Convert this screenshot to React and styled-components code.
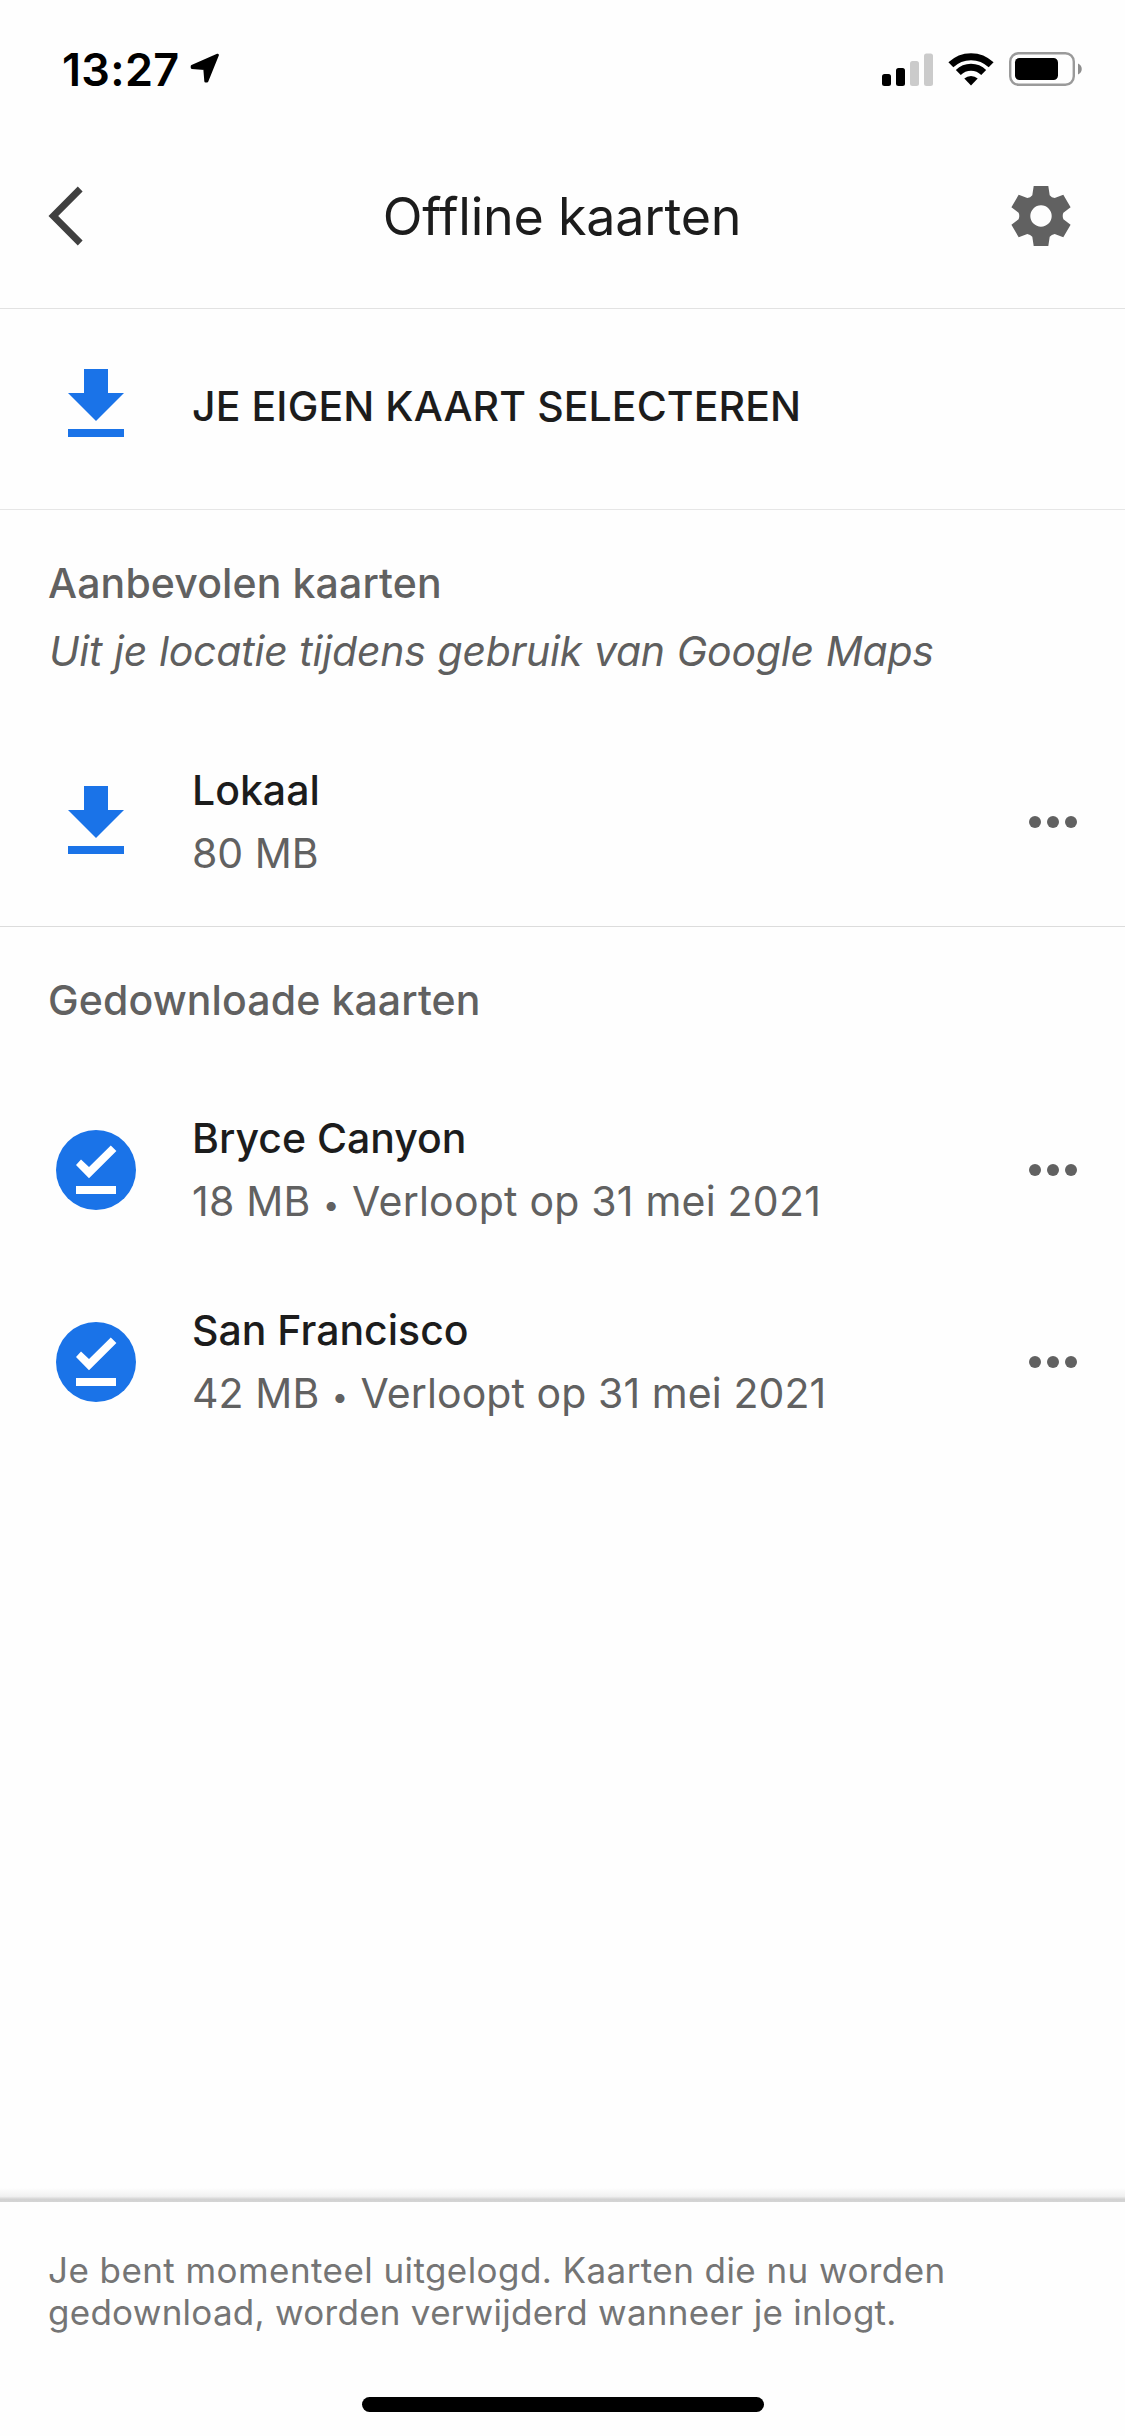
import styled, { createGlobalStyle } from "styled-components";

const GlobalStyle = createGlobalStyle`
  * {
    box-sizing: border-box;
    margin: 0;
    padding: 0;
  }
  body {
    background: #fefefe;
    font-family: Inter, "Liberation Sans", sans-serif;
    color: #1c1c1c;
  }
  svg {
    display: block;
    flex-shrink: 0;
  }
  button {
    border: none;
    background: none;
    font: inherit;
    color: inherit;
  }
`;

const Screen = styled.div`
  width: 1125px;
  height: 2436px;
  display: flex;
  flex-direction: column;
  overflow: hidden;
`;

const StatusBar = styled.div`
  height: 124px;
  padding: 14px 42px 0 62px;
  display: flex;
  align-items: center;
  justify-content: space-between;
  color: #000;
`;

const Clock = styled.div`
  display: flex;
  align-items: center;
  gap: 11px;
  font-size: 45px;
  font-weight: 600;
  letter-spacing: 0.3px;
`;

const StatusIcons = styled.div`
  display: flex;
  align-items: center;
  gap: 15px;
`;

const Header = styled.header`
  height: 185px;
  padding: 0 54px 0 48px;
  display: grid;
  grid-template-columns: 60px 1fr 60px;
  align-items: center;
  border-bottom: 1px solid #e2e2e2;
`;

const Title = styled.h1`
  padding-left: 5px;
  font-size: 52px;
  font-weight: 400;
  letter-spacing: -0.23px;
  text-align: center;
`;

const Select = styled.button`
  height: 201px;
  padding: 0 56px 8px;
  display: flex;
  align-items: center;
  gap: 56px;
  border-bottom: 1px solid #e6e6e6;
  font-size: 41px;
  font-weight: 500;
  letter-spacing: 0.1px;
  line-height: 60px;
  span {
    padding-top: 2px;
  }
`;

const Section = styled.section`
  padding: 39px 0 ${(props) => (props.$line ? "8px" : "0")};
  border-bottom: ${(props) => (props.$line ? "1px solid #dcdcdc" : "none")};
`;

const SectionTitle = styled.h2`
  padding-left: 48px;
  font-size: 41px;
  font-weight: 500;
  letter-spacing: 0.12px;
  line-height: 68px;
  color: #616161;
`;

const SectionText = styled.p`
  padding-left: 49px;
  font-size: 41px;
  font-style: italic;
  letter-spacing: -0.22px;
  word-spacing: 0.5px;
  line-height: 68px;
  color: #5f5f5f;
`;

const List = styled.ul`
  padding-top: ${(props) => props.$top}px;
  list-style: none;
`;

const Item = styled.li`
  height: 192px;
  padding: 0 45px 0 56px;
  display: flex;
  align-items: center;
  gap: 56px;
`;

const Info = styled.div`
  flex: 1;
  font-size: 41px;
  line-height: 63px;
`;

const Name = styled.div`
  font-weight: 500;
`;

const Size = styled.div`
  letter-spacing: ${(props) => props.$spacing || 0}px;
  color: #616161;
`;

const Dot = styled.span`
  display: inline-block;
  width: 18px;
  font-size: 29px;
  line-height: 1;
  text-align: center;
  vertical-align: 1px;
`;

const Footer = styled.footer`
  height: 248px;
  margin-top: auto;
  display: flex;
  flex-direction: column;
  align-items: center;
`;

const Shadow = styled.div`
  width: 100%;
  height: 14px;
  background: linear-gradient(#fefefe, #f0f0f0 60%, #d2d2d2 80%, #d4d4d4);
`;

const Notice = styled.p`
  width: 100%;
  padding: 47px 48px 0;
  font-size: 35px;
  line-height: 42px;
  color: #757575;
`;

const Line = styled.span`
  display: block;
  letter-spacing: ${(props) => props.$spacing}px;
`;

const HomeBar = styled.div`
  width: 402px;
  height: 15px;
  margin: auto 0 24px;
  border-radius: 8px;
  background: #000;
`;

const LocationIcon = () => (
  <svg width="31" height="32" viewBox="0 0 31 32">
    <path
      d="M2 13.2 L27.6 2 L17 28.2 L15.6 28.2 L14.6 15.6 L2 14.6 Z"
      fill="#000"
      stroke="#000"
      strokeWidth="2.6"
      strokeLinejoin="round"
    />
  </svg>
);

const SignalIcon = () => (
  <svg width="51" height="33" viewBox="0 0 51 33">
    <rect x="0" y="21" width="9" height="12" rx="2.5" />
    <rect x="14" y="15" width="9" height="18" rx="2.5" />
    <rect x="28" y="8" width="9" height="25" rx="2.5" fill="#cbcbcb" />
    <rect x="42" y="0.5" width="9" height="32.5" rx="2.5" fill="#cbcbcb" />
  </svg>
);

const WifiIcon = () => (
  <svg width="46" height="34" viewBox="0 0 46 34">
    <g fill="none" stroke="#000" strokeWidth="7">
      <path d="M2.85 12.85 A28.8 28.8 0 0 1 43.15 12.85" />
      <path d="M10.3 20.6 A18 18 0 0 1 35.7 20.6" />
    </g>
    <path d="M23 33.4 L16.3 26.6 A9.6 9.6 0 0 1 29.7 26.6 Z" />
  </svg>
);

const BatteryIcon = () => (
  <svg width="74" height="34" viewBox="0 0 74 34">
    <rect x="1.2" y="1.2" width="63.6" height="31.6" rx="8.5" fill="none" stroke="#9a9a9a" strokeWidth="2.4" />
    <rect x="6" y="6" width="43" height="22" rx="4.5" />
    <path d="M69 11.5 C74 13.5 74 20.5 69 22.5 Z" fill="#8e8e8e" />
  </svg>
);

const BackIcon = () => (
  <svg width="36" height="60" viewBox="0 0 36 60">
    <path d="M32.2 3 L5.3 30 L32.2 57" fill="none" stroke="#404040" strokeWidth="6.8" />
  </svg>
);

const GearIcon = () => (
  <svg width="60" height="60" viewBox="-30 -30 60 60">
    <path
      fill="#616161"
      fillRule="evenodd"
      d="M-7.3 -30 H7.3 L8.7 -20.8 Q10.6 -18.3 13.7 -17.9 L22.3 -21.3 L29.6 -8.7 L22.4 -3.2 Q21 0 22.4 3.2
        L29.6 8.7 L22.3 21.3 L13.7 17.9 Q10.6 18.3 8.7 20.8 L7.3 30 H-7.3 L-8.7 20.8 Q-10.6 18.3 -13.7 17.9
        L-22.3 21.3 L-29.6 8.7 L-22.4 3.2 Q-21 0 -22.4 -3.2 L-29.6 -8.7 L-22.3 -21.3 L-13.7 -17.9
        Q-10.6 -18.3 -8.7 -20.8 Z M0 -10.7 A10.7 10.7 0 1 0 0 10.7 A10.7 10.7 0 1 0 0 -10.7 Z"
    />
  </svg>
);

const DownloadIcon = () => (
  <svg width="80" height="80" viewBox="0 0 80 80" fill="#1a73e8">
    <path d="M28 4 H52 V28 H68 L40 56 L12 28 H28 Z" />
    <rect x="12" y="64" width="56" height="8" />
  </svg>
);

const DoneIcon = () => (
  <svg width="80" height="80" viewBox="0 0 80 80">
    <circle cx="40" cy="40" r="40" fill="#1a73e8" />
    <path d="M20 34.9 L25 29.6 L33 37 L54.8 15.4 L60.4 20.9 L33 48.2 Z" fill="#fff" />
    <rect x="20" y="56" width="40" height="8" fill="#fff" />
  </svg>
);

const MoreIcon = () => (
  <svg width="54" height="14" viewBox="0 0 54 14" fill="#616161">
    <circle cx="9" cy="7" r="6" />
    <circle cx="27" cy="7" r="6" />
    <circle cx="45" cy="7" r="6" />
  </svg>
);

const downloaded = [
  { id: 1, name: "Bryce Canyon", size: "18 MB", expires: "Verloopt op 31 mei 2021", spacing: 0.22 },
  { id: 2, name: "San Francisco", size: "42 MB", expires: "Verloopt op 31 mei 2021", spacing: 0.08 },
];

const MapItem = ({ icon, name, size, expires, spacing }) => (
  <Item>
    {icon}
    <Info>
      <Name>{name}</Name>
      <Size $spacing={spacing}>
        {size}
        {expires && (
          <>
            {" "}
            <Dot>•</Dot> {expires}
          </>
        )}
      </Size>
    </Info>
    <button>
      <MoreIcon />
    </button>
  </Item>
);

export default function App() {
  return (
    <>
      <GlobalStyle />
      <Screen>
        <StatusBar>
          <Clock>
            13:27
            <LocationIcon />
          </Clock>
          <StatusIcons>
            <SignalIcon />
            <WifiIcon />
            <BatteryIcon />
          </StatusIcons>
        </StatusBar>

        <Header>
          <button>
            <BackIcon />
          </button>
          <Title>Offline kaarten</Title>
          <button>
            <GearIcon />
          </button>
        </Header>

        <Select>
          <DownloadIcon />
          <span>JE EIGEN KAART SELECTEREN</span>
        </Select>

        <Section $line>
          <SectionTitle>Aanbevolen kaarten</SectionTitle>
          <SectionText>Uit je locatie tijdens gebruik van Google Maps</SectionText>
          <List $top={41}>
            <MapItem icon={<DownloadIcon />} name="Lokaal" size="80 MB" />
          </List>
        </Section>

        <Section>
          <SectionTitle>Gedownloade kaarten</SectionTitle>
          <List $top={40}>
            {downloaded.map(({ id, ...map }) => (
              <MapItem key={id} icon={<DoneIcon />} {...map} />
            ))}
          </List>
        </Section>

        <Footer>
          <Shadow />
          <Notice>
            <Line $spacing={0.43}>Je bent momenteel uitgelogd. Kaarten die nu worden</Line>
            <Line $spacing={0.27}>gedownload, worden verwijderd wanneer je inlogt.</Line>
          </Notice>
          <HomeBar />
        </Footer>
      </Screen>
    </>
  );
}
